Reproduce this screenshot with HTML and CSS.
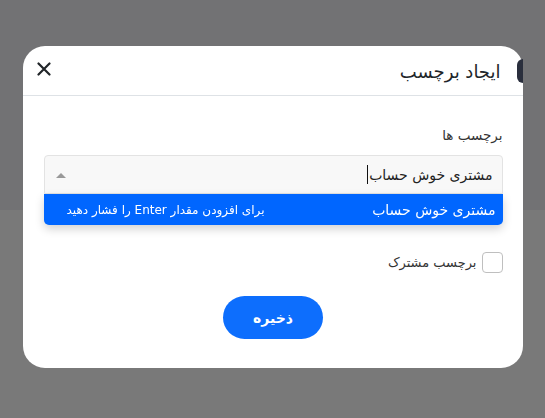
FILE: index.html
```html
<!DOCTYPE html>
<html lang="fa" dir="rtl">
<head>
<meta charset="utf-8">
<link rel="stylesheet" href="styles.css">
</head>
<body>
<div class="page">
  <div class="page-top"></div>
  <div class="page-bottom"></div>
</div>
<div class="overlay">
  <div class="modal">
    <div class="modal-header">
      <h5 class="modal-title">ایجاد برچسب</h5>
      <button class="close-btn" aria-label="بستن">
        <svg width="14" height="14" viewBox="0 0 14 14"><path d="M1.5 1.5 L12.5 12.5 M12.5 1.5 L1.5 12.5" stroke="#212529" stroke-width="2.2" stroke-linecap="round"/></svg>
      </button>
    </div>
    <div class="modal-body">
      <label class="field-label">برچسب ها</label>
      <div class="select">
        <div class="select-control">
          <span class="select-value">مشتری خوش حساب</span><span class="caret"></span>
          <span class="arrow"></span>
        </div>
        <div class="select-menu">
          <div class="option">
            <span class="opt-text">مشتری خوش حساب</span>
            <span class="hint">برای افزودن مقدار Enter را فشار دهید</span>
          </div>
        </div>
      </div>
      <label class="check-row">
        <span class="checkbox"></span>
        <span>برچسب مشترک</span>
      </label>
      <div class="actions">
        <button class="save-btn">ذخیره</button>
      </div>
    </div>
    <span class="side-tab"></span>
  </div>
</div>
</body>
</html>
```

FILE: styles.css
```css
* { box-sizing: border-box; }
html, body { margin: 0; padding: 0; }
body {
  width: 545px;
  height: 418px;
  overflow: hidden;
  font-family: "DejaVu Sans", "Noto Sans", sans-serif;
  color: #212529;
}
.page { display: flex; flex-direction: column; height: 418px; }
.page-top { height: 210px; background: #727274; }
.page-bottom { flex: 1; background: #797979; }

.overlay {
  position: fixed;
  inset: 0;
  display: flex;
  justify-content: center;
  align-items: flex-start;
  padding-top: 46px;
}
.modal {
  position: relative;
  width: 500px;
  height: 322px;
  background: #fff;
  border-radius: 22px;
}
.modal-header {
  height: 50px;
  display: flex;
  align-items: center;
  justify-content: space-between;
  padding: 0 22px 0 14px;
  border-bottom: 1px solid #dee2e6;
}
.modal-title {
  margin: 0;
  font-size: 18px;
  font-weight: normal;
  padding-top: 2px;
}
.close-btn {
  border: 0;
  background: none;
  padding: 0;
  width: 14px;
  height: 14px;
  display: flex;
  margin-top: -3px;
}
.modal-body {
  padding: 30px 20px 28px 21px;
}
.field-label {
  display: block;
  font-size: 13.5px;
  color: #333;
  line-height: 18px;
  margin-bottom: 11px;
}
.select { position: relative; margin-bottom: 58px; }
.select-control {
  height: 39px;
  background: #f8f8f8;
  border: 1px solid #e3e3e3;
  border-radius: 4px 4px 0 0;
  display: flex;
  align-items: center;
  padding: 0 9px 0 8px;
  font-size: 14px;
}
.select-value { color: #222; }
.caret {
  width: 1px;
  height: 19px;
  background: #111;
  margin-right: 1px;
}
.arrow {
  margin-right: auto;
  width: 0; height: 0;
  border-left: 5px solid transparent;
  border-right: 5px solid transparent;
  border-bottom: 5px solid #999;
  margin-left: 3px;
  margin-top: 1px;
}
.select-menu {
  position: absolute;
  top: 39px;
  left: 0;
  right: 0;
  background: #0066ff;
  border-radius: 0 0 5px 5px;
  box-shadow: 0 4px 10px rgba(0,0,0,0.18);
}
.option {
  height: 31px;
  display: flex;
  align-items: center;
  justify-content: space-between;
  padding: 0 7px 0 20px;
  color: #fff;
  font-size: 14px;
}
.opt-text { margin-left: auto; }
.hint { font-size: 12px; width: 201px; text-align: right; }
.check-row {
  display: flex;
  align-items: center;
  gap: 5px;
  font-size: 13px;
  color: #333;
}
.checkbox {
  width: 21px;
  height: 21px;
  border: 1px solid #bfbfbf;
  border-radius: 4px;
  background: #fff;
}
.actions {
  display: flex;
  justify-content: center;
  margin-top: 23px;
}
.save-btn {
  width: 100px;
  height: 43px;
  border: 0;
  border-radius: 22px;
  background: #0d6efd;
  color: #fff;
  font-family: inherit;
  font-weight: bold;
  font-size: 14px;
}
.side-tab {
  position: absolute;
  top: 13px;
  right: 0;
  width: 6px;
  height: 24px;
  background: #2a2f3d;
  border-radius: 6px 0 0 6px;
}
```
